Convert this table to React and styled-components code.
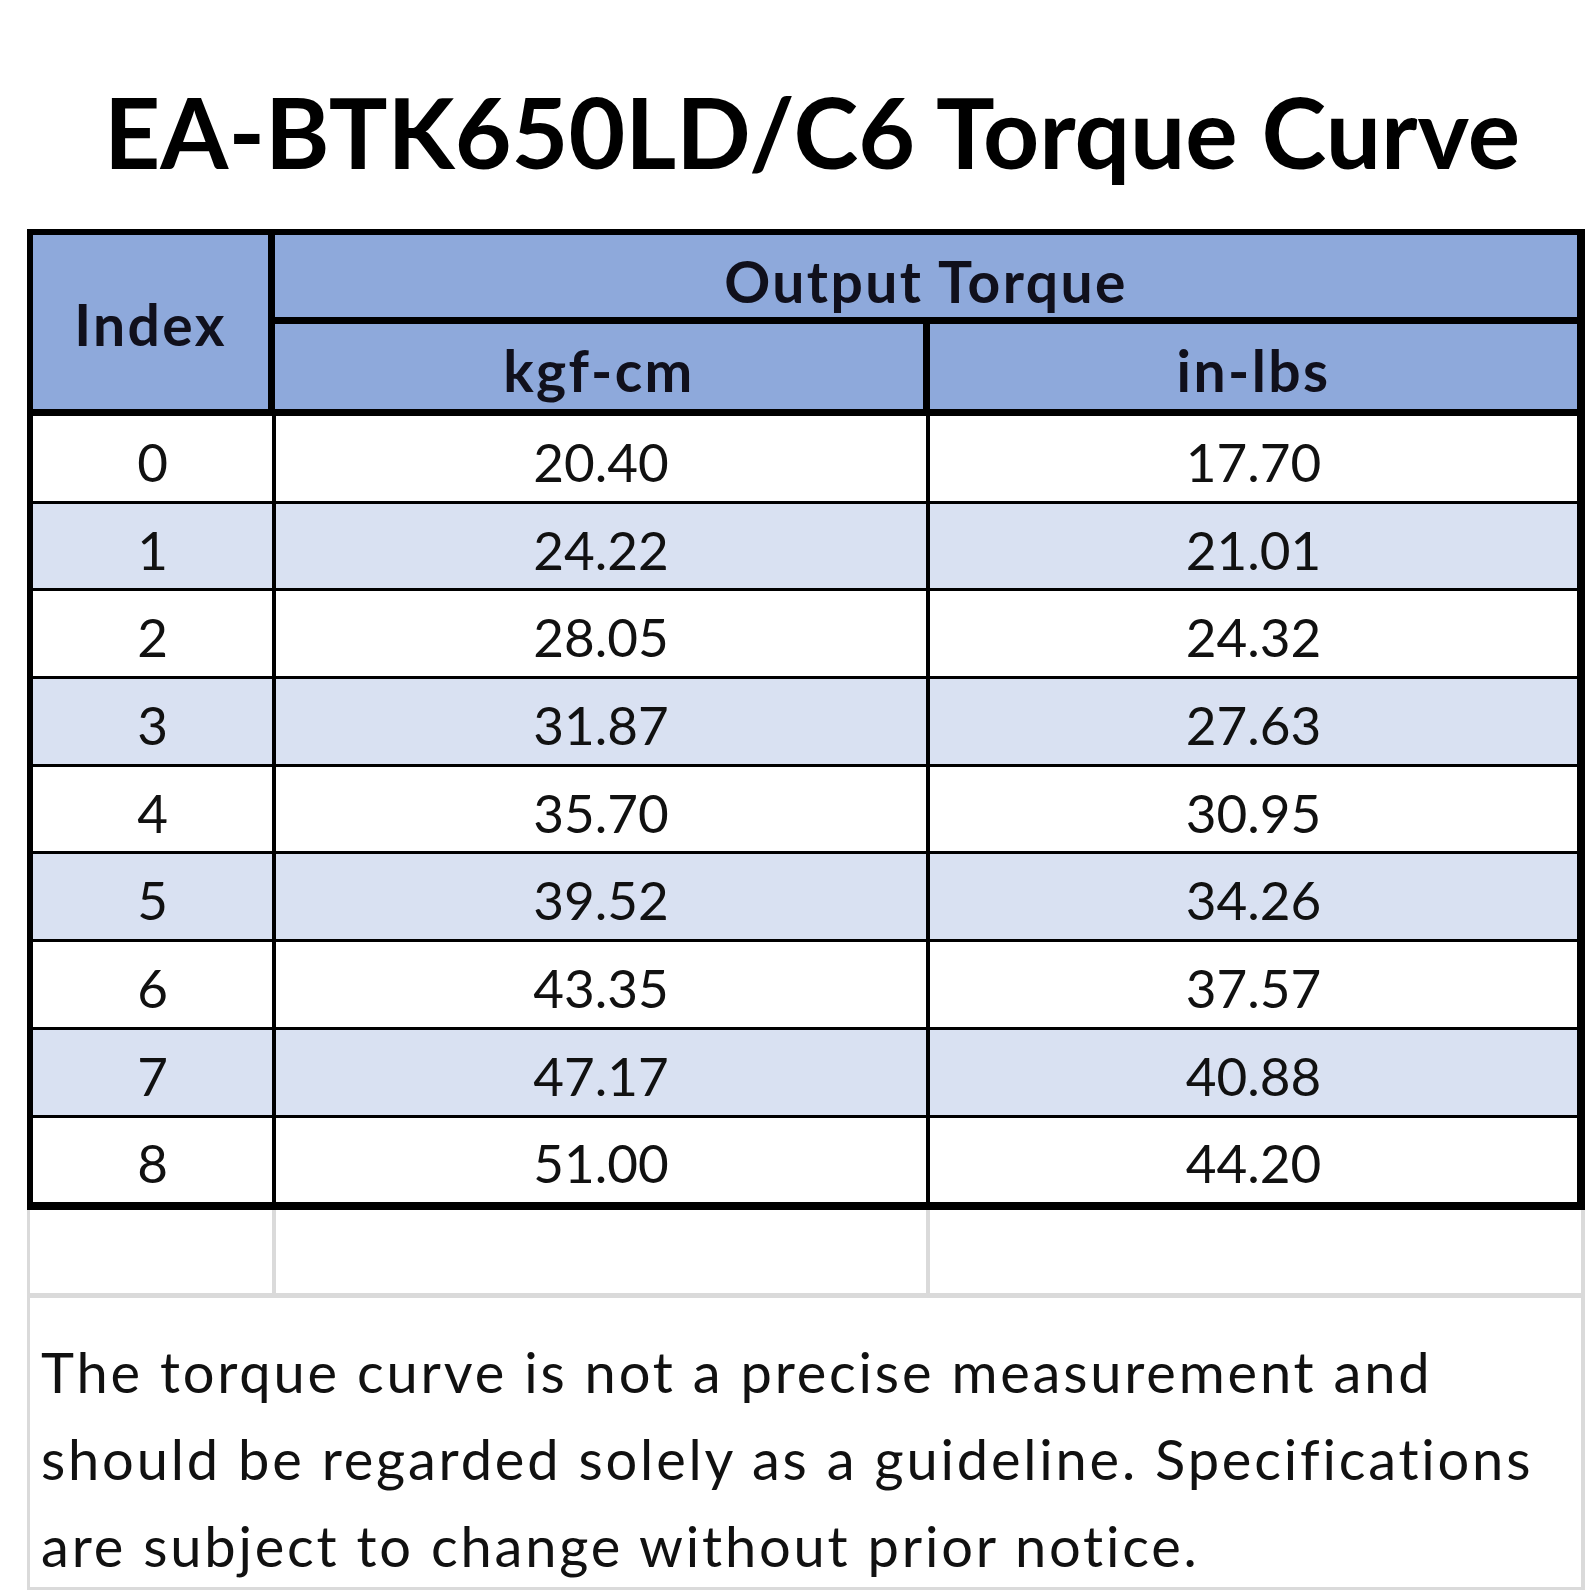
import React from "react";
import styled, { createGlobalStyle } from "styled-components";

const Global = createGlobalStyle`
  html, body { margin: 0; padding: 0; background: #fff; overflow: hidden; }
  body { font-family: Lato, "Open Sans", sans-serif; color: #111; }
  *, *::before, *::after { box-sizing: border-box; }
`;

const Page = styled.div`
  width: 1590px;
  height: 1590px;
  padding-top: 72px;
  overflow: hidden;
`;

const Title = styled.h1`
  margin: 0 0 38px 0;
  font-family: Lato, sans-serif;
  font-weight: 700;
  font-size: 98px;
  line-height: 119px;
  text-align: center;
  color: #000;
  padding-left: 34px;
  white-space: nowrap;
`;

const Table = styled.div`
  margin-left: 27px;
  width: 1558px;
  border-style: solid;
  border-color: #000;
  border-width: 6px 8px 8px 6px;
`;

const Head = styled.div`
  display: flex;
  background: #8ea9db;
  border-bottom: 7px solid #000;
  font-weight: 700;
  font-size: 57px;
  letter-spacing: 2.4px;
  color: #10101c;
`;

const IndexHead = styled.div`
  width: 242px;
  flex: none;
  border-right: 7px solid #000;
  display: flex;
  align-items: center;
  justify-content: center;
  padding-top: 4px;
`;

const HeadRight = styled.div`
  flex: 1;
  display: flex;
  flex-direction: column;
`;

const TopHead = styled.div`
  height: 89px;
  border-bottom: 7px solid #000;
  display: flex;
  align-items: center;
  justify-content: center;
  padding-top: 10px;
`;

const SubRow = styled.div`
  height: 85px;
  display: flex;
`;

const SubCell = styled.div`
  display: flex;
  align-items: center;
  justify-content: center;
  padding-top: 6px;
  ${(p) => (p.$first ? "width: 655px; border-right: 7px solid #000; flex: none;" : "flex: 1;")}
`;

const Row = styled.div`
  display: flex;
  height: ${(p) => (p.$last ? "84.7px" : "87.7px")};
  background: ${(p) => (p.$alt ? "#d9e1f2" : "#fff")};
  border-bottom: ${(p) => (p.$last ? "none" : "3px solid #000")};
  font-size: 53px;
  color: #111;
`;

const Cell = styled.div`
  display: flex;
  align-items: center;
  justify-content: center;
  padding-top: 6px;
  ${(p) =>
    p.$w
      ? `width: ${p.$w}px; flex: none; border-right: 4px solid #000;`
      : "flex: 1;"}
`;

const GridRow = styled.div`
  margin-left: 27px;
  width: 1558px;
  height: 88px;
  display: flex;
  border-left: 3px solid #dadada;
  border-right: 4px solid #dadada;
  border-bottom: 5px solid #dadada;
`;

const GridCell = styled.div`
  ${(p) =>
    p.$w
      ? `width: ${p.$w}px; flex: none; border-right: 4px solid #dadada;`
      : "flex: 1;"}
`;

const Note = styled.div`
  margin-left: 27px;
  width: 1558px;
  height: 292px;
  border-left: 3px solid #dadada;
  border-right: 4px solid #dadada;
  border-bottom: 3px solid #dadada;
  padding: 30px 0 0 11px;
  font-size: 56px;
  letter-spacing: 2.8px;
  line-height: 87px;
  color: #111;
  white-space: nowrap;
`;

const data = [
  ["0", "20.40", "17.70"],
  ["1", "24.22", "21.01"],
  ["2", "28.05", "24.32"],
  ["3", "31.87", "27.63"],
  ["4", "35.70", "30.95"],
  ["5", "39.52", "34.26"],
  ["6", "43.35", "37.57"],
  ["7", "47.17", "40.88"],
  ["8", "51.00", "44.20"],
];

export default function App() {
  return (
    <Page>
      <Global />
      <Title>EA-BTK650LD/C6 Torque Curve</Title>
      <Table>
        <Head>
          <IndexHead>Index</IndexHead>
          <HeadRight>
            <TopHead>Output Torque</TopHead>
            <SubRow>
              <SubCell $first>kgf-cm</SubCell>
              <SubCell>in-lbs</SubCell>
            </SubRow>
          </HeadRight>
        </Head>
        {data.map((r, i) => (
          <Row key={r[0]} $alt={i % 2 === 1} $last={i === data.length - 1}>
            <Cell $w={243}>{r[0]}</Cell>
            <Cell $w={654}>{r[1]}</Cell>
            <Cell>{r[2]}</Cell>
          </Row>
        ))}
      </Table>
      <GridRow>
        <GridCell $w={246} />
        <GridCell $w={654} />
        <GridCell />
      </GridRow>
      <Note>
        The torque curve is not a precise measurement and
        <br />
        should be regarded solely as a guideline. Specifications
        <br />
        are subject to change without prior notice.
      </Note>
    </Page>
  );
}
